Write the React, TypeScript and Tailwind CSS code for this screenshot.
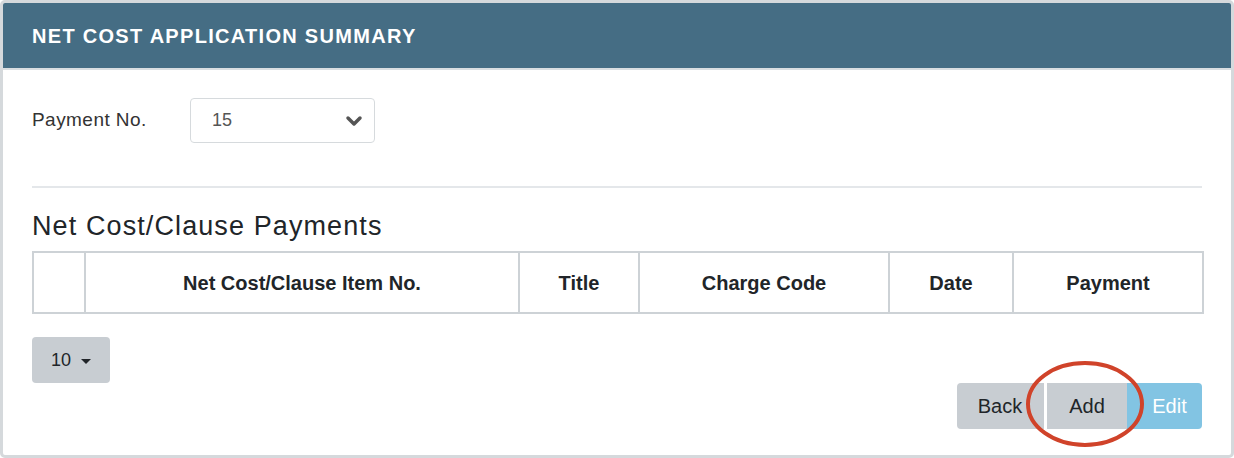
import { ChevronDown } from 'lucide-react';

const columns = [
  { label: '', width: 'w-[52px]' },
  { label: 'Net Cost/Clause Item No.', width: 'w-[434px]' },
  { label: 'Title', width: 'w-[120px]' },
  { label: 'Charge Code', width: 'w-[250px]' },
  { label: 'Date', width: 'w-[124px]' },
  { label: 'Payment', width: '' },
];

export default function App() {
  return (
    <div className="h-[458px] w-[1234px] bg-white font-['Liberation_Sans',Arial,sans-serif] text-[#212529]">
      <div className="flex h-full flex-col overflow-hidden rounded-[5px] border-[3px] border-[#d5d9dc]">
        <div className="flex h-[67px] shrink-0 items-center border-b-2 border-[#d9dee1] bg-[#456d84] px-[29px]">
          <h1 className="text-[20px] font-bold tracking-[1.3px] text-white">NET COST APPLICATION SUMMARY</h1>
        </div>

        <div className="flex flex-1 flex-col px-[29px]">
          <div className="mt-[28px] flex items-center">
            <label className="w-[158px] text-[19px] tracking-[0.45px] text-[#333]">Payment No.</label>
            <div className="flex h-[45px] w-[185px] items-center justify-between rounded-[4px] border border-[#d6dadd] pl-[21px] pr-[8px]">
              <span className="text-[18px] text-[#555]">15</span>
              <ChevronDown className="h-6 w-6 text-[#555]" strokeWidth={3.5} />
            </div>
          </div>

          <hr className="mt-[43px] border-t-2 border-[#e4e7ea]" />

          <h2 className="mt-[22px] text-[27px] leading-[32px] tracking-[1.1px] text-[#212529]">Net Cost/Clause Payments</h2>

          <table className="mt-[9px] w-[1172px] table-fixed border-collapse">
            <thead>
              <tr className="h-[61px]">
                {columns.map((c, i) => (
                  <th
                    key={i}
                    className={`${c.width} border-2 border-[#cdd2d6] text-center text-[20px] font-bold text-[#212529]`}
                  >
                    {c.label}
                  </th>
                ))}
              </tr>
            </thead>
          </table>

          <div className="mt-[23px]">
            <button className="flex h-[46px] w-[78px] items-center justify-center gap-[10px] rounded-[4px] bg-[#c8cdd2] text-[18px] text-[#212529]">
              10
              <span className="mt-[2px] h-0 w-0 border-x-[5px] border-t-[5px] border-x-transparent border-t-[#212529]" />
            </button>
          </div>

          <div className="flex justify-end">
            <div className="relative flex h-[46px]">
              <button className="h-[46px] w-[90px] rounded-l-[4px] bg-[#c8cdd2] pr-[4px] text-[20px] text-[#212529]">Back</button>
              <button className="h-[46px] w-[80px] bg-[#c8cdd2] text-[20px] text-[#212529] shadow-[0_0_0_3px_#ffffff]">Add</button>
              <button className="h-[46px] w-[75px] rounded-r-[4px] bg-[#82c4e3] pl-[10px] text-[20px] text-white">Edit</button>
              <svg
                className="pointer-events-none absolute left-[68px] top-[-22px]"
                width="124"
                height="90"
                viewBox="0 0 124 90"
              >
                <ellipse cx="60" cy="43" rx="57" ry="41" fill="none" stroke="#d0432a" strokeWidth="4" />
              </svg>
            </div>
          </div>
        </div>
      </div>
    </div>
  );
}
